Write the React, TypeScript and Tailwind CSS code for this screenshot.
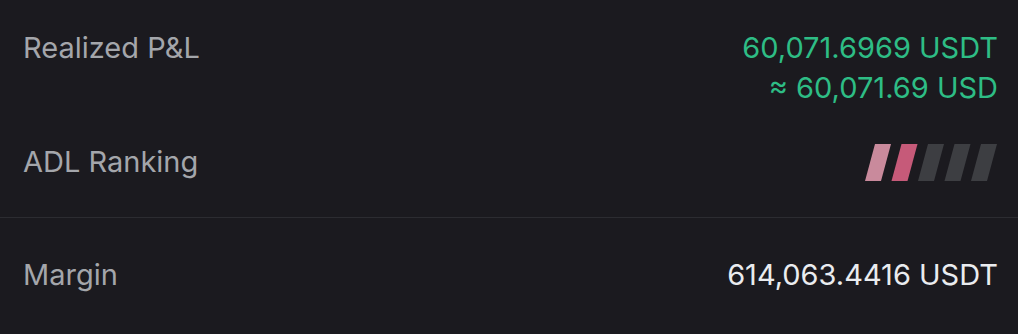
const bars = ['#c98a9c', '#c65a79', '#3d3e42', '#3d3e42', '#3d3e42'];

function AdlBars() {
  return (
    <svg width="133" height="37" viewBox="0 0 133 37">
      {bars.map((c, i) => {
        const x = i * 26.5;
        return (
          <polygon
            key={i}
            points={`${x},37 ${x + 16},37 ${x + 26},0 ${x + 10},0`}
            fill={c}
          />
        );
      })}
    </svg>
  );
}

export default function App() {
  return (
    <div
      className="w-full h-[334px] bg-[#1b1a1f] text-[29px] leading-[40px]"
      style={{ fontFamily: 'Inter, "Noto Sans", sans-serif' }}
    >
      <div className="pl-[23px] pr-[20px] pt-[28px]">
        {/* Realized P&L */}
        <div className="flex justify-between items-start">
          <span className="text-[#a4a6ab]">Realized P&amp;L</span>
          <div className="flex flex-col items-end text-[#2ebd85]">
            <span>60,071.6969 USDT</span>
            <span>≈ 60,071.69 USD</span>
          </div>
        </div>

        {/* ADL */}
        <div className="flex justify-between items-center mt-[34px]">
          <span className="text-[#a4a6ab]">ADL Ranking</span>
          <AdlBars />
        </div>
      </div>

      <div className="mt-[35px] h-px bg-[#2c2c31]" />

      <div className="pl-[23px] pr-[20px] mt-[37px] flex justify-between items-center">
        <span className="text-[#a4a6ab]">Margin</span>
        <span className="text-[#eaecef]">614,063.4416 USDT</span>
      </div>
    </div>
  );
}
